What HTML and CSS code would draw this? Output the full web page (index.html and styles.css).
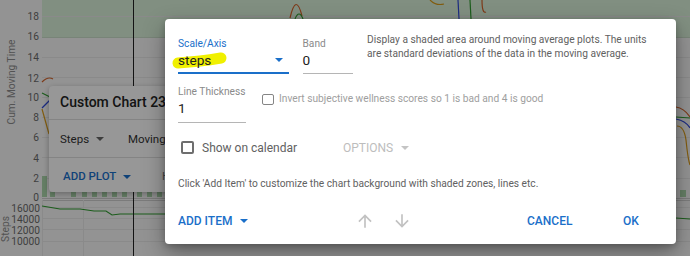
FILE: index.html
```html
<!DOCTYPE html>
<html lang="en">
<head>
    <meta charset="UTF-8">
    <meta name="viewport" content="width=device-width, initial-scale=1.0">
    <title>Custom Chart</title>
    <link rel="stylesheet" href="styles.css">
</head>
<body>
    <div class="page">
        <svg class="charts" width="690" height="256" viewBox="0 0 690 256">
            <!-- upper chart -->
            <rect x="42" y="0" width="648" height="37" fill="#d8eed8"/>
            <g stroke="#e6e6e6" stroke-width="1">
                <line x1="42" y1="16.5" x2="690" y2="16.5"/>
                <line x1="42" y1="57.5" x2="690" y2="57.5"/>
                <line x1="42" y1="77.5" x2="690" y2="77.5"/>
                <line x1="42" y1="97.5" x2="690" y2="97.5"/>
                <line x1="42" y1="117.5" x2="690" y2="117.5"/>
                <line x1="42" y1="137.5" x2="690" y2="137.5"/>
                <line x1="42" y1="157.5" x2="690" y2="157.5"/>
                <line x1="42" y1="178.5" x2="690" y2="178.5"/>
            </g>
            <line x1="42" y1="37.5" x2="690" y2="37.5" stroke="#c8dcc8"/>
            <line x1="42" y1="198.5" x2="690" y2="198.5" stroke="#cfcfcf"/>
            <g class="ticks" text-anchor="end">
                <text x="39" y="20">18</text>
                <text x="39" y="40">16</text>
                <text x="39" y="61">14</text>
                <text x="39" y="82">12</text>
                <text x="39" y="101">10</text>
                <text x="39" y="121">8</text>
                <text x="39" y="141">6</text>
                <text x="39" y="162">4</text>
                <text x="39" y="182">2</text>
                <text x="39" y="201">0</text>
            </g>
            <text class="axis-title" x="0" y="0" transform="translate(15 82) rotate(-90)">Cum. Moving Time</text>
            <rect x="42" y="176" width="5" height="21" fill="#a9d4a9"/>
            <g fill="#a9d4a9">
                <rect x="50" y="192" width="5" height="5"/>
                <rect x="71" y="192" width="5" height="5"/>
                <rect x="82" y="192" width="5" height="5"/>
                <rect x="92" y="192" width="5" height="5"/>
                <rect x="102" y="192" width="5" height="5"/>
                <rect x="112" y="192" width="5" height="5"/>
                <rect x="122" y="192" width="5" height="5"/>
                <rect x="137" y="192" width="5" height="5"/>
                <rect x="147" y="192" width="5" height="5"/>
                <rect x="157" y="192" width="5" height="5"/>
                <rect x="680" y="190" width="6" height="7"/>
            </g>
            <g fill="none" stroke-width="1.2">
                <path d="M42 82 Q48 76 53 79" stroke="#d0622a"/>
                <path d="M42 93 L50 97" stroke="#2e9a2e"/>
                <path d="M42 108 L50 100" stroke="#2f48d8"/>
                <path d="M42 109 L49 134" stroke="#d89a1a"/>
                <path d="M290 18 Q296 -8 302 16" stroke="#d0622a"/>
                <path d="M295 19 Q299 9 303 19" stroke="#2e9a2e"/>
                <path d="M430 0 Q436 6 444 4" stroke="#d89a1a"/>
                <path d="M458 0 L459 19" stroke="#2f48d8"/>
                <path d="M470 0 L471 19" stroke="#2e9a2e"/>
                <path d="M482 0 Q482 14 486 12" stroke="#d0622a"/>
                <path d="M676 107 Q684 108 690 117" stroke="#d0622a"/>
                <path d="M676 117 L690 118" stroke="#2e9a2e"/>
                <path d="M676 119 Q686 121 690 128" stroke="#2f48d8"/>
                <path d="M677 126 Q684 126 686 140 Q688 160 690 165" stroke="#d89a1a"/>
            </g>
            <!-- lower chart -->
            <line x1="42" y1="200.5" x2="690" y2="200.5" stroke="#cfcfcf"/>
            <g stroke="#e6e6e6">
                <line x1="42" y1="207.5" x2="690" y2="207.5"/>
                <line x1="42" y1="218.5" x2="690" y2="218.5"/>
                <line x1="42" y1="229.5" x2="690" y2="229.5"/>
                <line x1="42" y1="241.5" x2="690" y2="241.5"/>
                <line x1="42.5" y1="200" x2="42.5" y2="256"/>
                <line x1="83.5" y1="200" x2="83.5" y2="256"/>
            </g>
            <g class="ticks" text-anchor="end">
                <text x="40" y="211.5">16000</text>
                <text x="40" y="222.5">14000</text>
                <text x="40" y="233.5">12000</text>
                <text x="40" y="245">10000</text>
            </g>
            <text class="axis-title" x="0" y="0" transform="translate(9 229) rotate(-90)">Steps</text>
            <path d="M42 206 L60 209 L80 209 L94 211 L106 211 L112 215 L120 214 L150 214 L166 214" fill="none" stroke="#2e9a2e" stroke-width="1.2"/>
            <path d="M676 218 L690 219" fill="none" stroke="#2e9a2e" stroke-width="1.2"/>
            <line x1="133.5" y1="0" x2="133.5" y2="256" stroke="#222"/>
        </svg>

        <div class="chart-card">
            <div class="card-title">Custom Chart 23</div>
            <div class="card-row">
                <span class="card-select">Steps <i class="caret caret-grey"></i></span>
                <span class="card-select">Moving</span>
            </div>
            <div class="card-row card-actions">
                <span class="card-btn">ADD PLOT <i class="caret caret-blue"></i></span>
                <span class="card-muted">H</span>
            </div>
        </div>

        <div class="backdrop">
            <div class="dialog">
                <div class="row-top">
                    <div class="field">
                        <label class="field-label focused">Scale/Axis</label>
                        <div class="field-input focused">
                            <svg class="marker" width="60" height="20" viewBox="0 0 60 20">
                                <path d="M6 13 Q18 12 28 11 T49 8" stroke="#f0f000" stroke-width="11" fill="none" stroke-linecap="round"/>
                            </svg>
                            <span class="value">steps</span>
                            <i class="caret caret-blue"></i>
                        </div>
                    </div>
                    <div class="field">
                        <label class="field-label">Band</label>
                        <div class="field-input"><span class="value">0</span></div>
                    </div>
                    <p class="help">Display a shaded area around moving average plots. The units are standard deviations of the data in the moving average.</p>
                </div>

                <div class="row-mid">
                    <div class="field field-thick">
                        <label class="field-label">Line Thickness</label>
                        <div class="field-input"><span class="value">1</span></div>
                    </div>
                    <label class="check check-small">
                        <span class="box"></span>
                        Invert subjective wellness scores so 1 is bad and 4 is good
                    </label>
                </div>

                <div class="row-cal">
                    <label class="check check-cal">
                        <span class="box"></span>
                        Show on calendar
                    </label>
                    <span class="options">OPTIONS <i class="caret caret-light"></i></span>
                </div>

                <p class="note">Click 'Add Item' to customize the chart background with shaded zones, lines etc.</p>

                <div class="actions">
                    <span class="btn">ADD ITEM <i class="caret caret-blue"></i></span>
                    <svg class="move" width="20" height="20" viewBox="0 0 24 24"><path d="M4 12l1.41 1.41L11 7.83V20h2V7.83l5.58 5.59L20 12l-8-8-8 8z"/></svg>
                    <svg class="move" width="20" height="20" viewBox="0 0 24 24"><path d="M20 12l-1.41-1.41L13 16.17V4h-2v12.17l-5.58-5.59L4 12l8 8 8-8z"/></svg>
                    <span class="btn">CANCEL</span>
                    <span class="btn">OK</span>
                </div>
            </div>
        </div>
    </div>
</body>
</html>
```

FILE: styles.css
```css
body {
    margin: 0;
    font-family: Roboto, "Noto Sans", sans-serif;
    background: #fff;
}
.page {
    position: relative;
    width: 690px;
    height: 256px;
    overflow: hidden;
    background: #f6f6f6;
}
.charts {
    display: block;
}
.ticks {
    font-family: Roboto, sans-serif;
    font-size: 10.2px;
    fill: #6a6a6a;
}
.axis-title {
    font-family: Roboto, sans-serif;
    font-size: 10.2px;
    fill: #8a8a8a;
    text-anchor: middle;
}

/* card behind the dialog */
.chart-card {
    position: absolute;
    left: 49px;
    top: 86px;
    width: 200px;
    height: 106px;
    background: #fcfcfc;
    border-radius: 4px;
    box-shadow: 0 2px 6px rgba(0, 0, 0, 0.3);
    color: #222;
}
.card-title {
    font-size: 14px;
    font-weight: 500;
    line-height: 16px;
    padding: 8px 11px 0;
    height: 25px;
    border-bottom: 1px solid #ddd;
}
.card-row {
    display: flex;
    align-items: center;
    gap: 24px;
    height: 37px;
    padding: 0 11px;
    border-bottom: 1px solid #ddd;
    font-size: 11.5px;
}
.card-actions {
    border-bottom: none;
    height: 36px;
    padding-left: 14px;
    gap: 31px;
}
.card-select {
    color: #333;
}
.card-btn {
    color: #1a6fc9;
    font-weight: 500;
}
.card-muted {
    color: #777;
}

.caret {
    display: inline-block;
    width: 0;
    height: 0;
    border-left: 4px solid transparent;
    border-right: 4px solid transparent;
    border-top: 4.5px solid #555;
    vertical-align: middle;
    margin-left: 4px;
}
.caret-grey { border-top-color: #666; }
.caret-blue { border-top-color: #1a6fc9; }
.caret-light { border-top-color: #c4c4c4; }

/* dialog */
.backdrop {
    position: absolute;
    inset: 0;
    background: rgba(0, 0, 0, 0.4);
    padding: 19px 0 0 165px;
}
.dialog {
    width: 511px;
    height: 225px;
    box-sizing: border-box;
    background: #fff;
    border-radius: 4px;
    box-shadow: 0 9px 22px rgba(0, 0, 0, 0.35), 0 2px 6px rgba(0, 0, 0, 0.2);
    padding: 18.5px 13px 0 13px;
    display: flex;
    flex-direction: column;
}

.row-top {
    display: grid;
    grid-template-columns: 110.5px 50.5px 1fr;
    column-gap: 14px;
}
.field {
    display: flex;
    flex-direction: column;
}
.field-label {
    font-size: 10.2px;
    line-height: 12px;
    color: #8a8a8a;
}
.field-label.focused {
    color: #1a6fc9;
}
.field-input {
    position: relative;
    display: flex;
    align-items: center;
    height: 20px;
    padding-bottom: 3.5px;
    border-bottom: 1px solid #b5b5b5;
    font-size: 13.6px;
    line-height: 20px;
    color: #222;
}
.field-input.focused {
    padding-bottom: 2.5px;
    border-bottom: 2px solid #1a6fc9;
}
.field-input .value {
    position: relative;
    flex: 1;
}
.field-input .caret {
    margin-right: 6px;
}
.marker {
    position: absolute;
    left: -6px;
    top: 0;
}
.help {
    margin: -5px 0 0;
    max-width: 290px;
    font-size: 10.2px;
    line-height: 14.4px;
    color: #616161;
}

.row-mid {
    display: flex;
    align-items: flex-start;
    gap: 16px;
    margin-top: 12px;
}
.field-thick {
    width: 68px;
}
.check {
    display: flex;
    align-items: center;
}
.box {
    box-sizing: border-box;
    width: 13px;
    height: 13px;
    border: 2px solid #6e6e6e;
    border-radius: 2px;
}
.check-small {
    gap: 5px;
    margin-top: 7px;
    font-size: 10.2px;
    line-height: 12px;
    color: #9e9e9e;
}
.check-small .box {
    width: 12px;
    height: 11px;
    border-width: 1.5px;
    border-color: #858585;
}

.row-cal {
    display: flex;
    align-items: center;
    height: 20px;
    margin-top: 15px;
    padding-left: 3px;
}
.check-cal {
    width: 162px;
    gap: 8px;
    font-size: 12px;
    color: #616161;
}
.options {
    font-size: 12px;
    color: #bdbdbd;
}
.options .caret {
    margin-left: 5px;
}

.note {
    margin: 19px 0 0;
    font-size: 10.2px;
    line-height: 13px;
    color: #616161;
}

.actions {
    display: grid;
    grid-template-columns: 177px 37px 135px 96px auto;
    align-items: center;
    height: 24px;
    margin-top: 19px;
}
.btn {
    font-size: 12px;
    font-weight: 500;
    color: #1a6fc9;
}
.btn .caret {
    margin-left: 5px;
}
.move {
    fill: #c2c2c2;
}
```
